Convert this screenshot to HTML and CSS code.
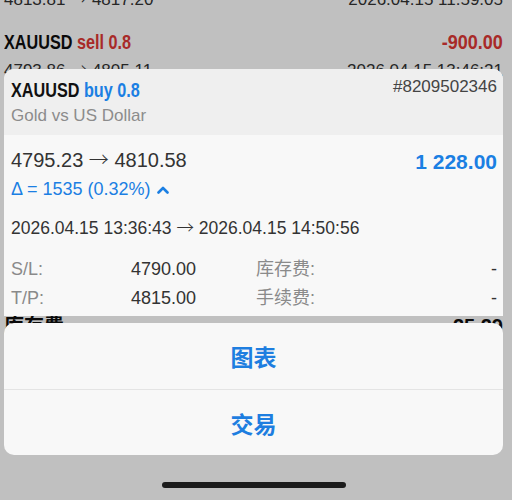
FILE: index.html
```html
<!DOCTYPE html>
<html>
<head>
  <link rel="stylesheet" href="styles.css">
</head>
<body>

  <div class="trades">
    <div class="trade-sub first">
      <span>4813.81 <span class="arrow">→</span> 4817.20</span>
      <span>2026.04.15 11:59:05</span>
    </div>
    <div class="trade-head">
      <span class="cond">XAUUSD <span class="sell">sell 0.8</span></span>
      <span class="cond right loss">-900.00</span>
    </div>
    <div class="trade-sub">
      <span>4793.86 <span class="arrow">→</span> 4805.11</span>
      <span>2026.04.15 13:46:21</span>
    </div>
    <div class="trade-extra">
      <span>库存费</span>
      <span>25.29</span>
    </div>
  </div>

  <div class="popup">
    <div class="card">
      <div class="card-head">
        <div>
          <div class="title"><span class="cond">XAUUSD <span class="buy">buy 0.8</span></span></div>
          <div class="subtitle">Gold vs US Dollar</div>
        </div>
        <div class="ticket">#8209502346</div>
      </div>
      <div class="card-body">
        <div class="price-row">
          <span class="prices">4795.23 <span class="arrow">→</span> 4810.58</span>
          <span class="profit">1 228.00</span>
        </div>
        <div class="delta">
          <span>Δ = 1535 (0.32%)</span>
          <svg width="12" height="9" viewBox="0 0 12 9">
            <path d="M1.5 7.5 L6 3 L10.5 7.5" fill="none" stroke="#1b7fe3" stroke-width="2.6" stroke-linecap="round" stroke-linejoin="round"/>
          </svg>
        </div>
        <div class="times">2026.04.15 13:36:43 <span class="arrow">→</span> 2026.04.15 14:50:56</div>
        <div class="levels">
          <span class="label">S/L:</span>
          <span class="value">4790.00</span>
          <span class="label">库存费:</span>
          <span class="value">-</span>
          <span class="label">T/P:</span>
          <span class="value">4815.00</span>
          <span class="label">手续费:</span>
          <span class="value">-</span>
        </div>
      </div>
    </div>

    <div class="sheet">
      <div class="action">图表</div>
      <div class="action">交易</div>
    </div>

    <div class="home-bar"></div>
  </div>

</body>
</html>
```

FILE: styles.css
```css
body {
  margin: 0;
  height: 500px;
  overflow: hidden;
  position: relative;
  background-color: #c0c0c0;
  font-family: 'Liberation Sans', 'Noto Sans CJK SC', sans-serif;
}

/* narrow bold face for symbols */
.cond {
  display: inline-block;
  font-weight: bold;
  transform: scaleX(0.81);
  transform-origin: left center;
  white-space: nowrap;
}
.cond.right {
  transform: scaleX(0.9);
  transform-origin: right center;
}
.arrow {
  font-family: 'Noto Sans CJK SC', sans-serif;
  font-weight: 300;
  line-height: 1;
}

/* list behind the dimmed overlay */
.trades {
  padding: 0 9px 0 4px;
}
.trade-sub {
  display: flex;
  justify-content: space-between;
  height: 24px;
  font-size: 17px;
  line-height: 24px;
  color: #262626;
  margin-top: 3px;
}
.trade-sub.first {
  margin-top: -12px;
}
.trade-head {
  display: flex;
  justify-content: space-between;
  height: 28px;
  margin-top: 16px;
  font-size: 20px;
  line-height: 28px;
  color: #0a0a0a;
}
.sell, .loss {
  color: #a82a28;
}
.trade-extra {
  display: flex;
  justify-content: space-between;
  margin-top: 229px;
  font-size: 20px;
  line-height: 28px;
  font-weight: bold;
  color: #0a0a0a;
}

/* overlay */
.popup {
  position: absolute;
  top: 0;
  left: 0;
  right: 0;
  bottom: 0;
  padding: 69px 9px 0 4px;
  display: flex;
  flex-direction: column;
}
.card {
  background-color: #f8f8f8;
  border-radius: 10px 10px 0 0;
  overflow: hidden;
}
.card-head {
  display: flex;
  justify-content: space-between;
  align-items: flex-start;
  padding: 9px 6px 7px 7px;
  background-color: #efefef;
}
.title {
  height: 24px;
  font-size: 20px;
  line-height: 24px;
  color: #111;
}
.buy {
  color: #1b7fe3;
}
.subtitle {
  margin-top: 2px;
  height: 24px;
  font-size: 17px;
  line-height: 24px;
  color: #8c8c8c;
}
.ticket {
  font-size: 17px;
  line-height: 18px;
  color: #444;
}
.card-body {
  padding: 13px 6px 3px 7px;
}
.price-row {
  display: flex;
  justify-content: space-between;
  align-items: flex-start;
  height: 24px;
}
.prices {
  font-size: 20px;
  line-height: 24px;
  color: #333;
}
.profit {
  margin-top: 2px;
  font-size: 21px;
  line-height: 24px;
  font-weight: bold;
  color: #1b7fe3;
}
.delta {
  display: flex;
  align-items: center;
  gap: 6px;
  height: 24px;
  margin-top: 5px;
  font-size: 18px;
  line-height: 24px;
  color: #1b7fe3;
}
.times {
  height: 24px;
  margin-top: 15px;
  font-size: 17.5px;
  line-height: 24px;
  color: #333;
}
.levels {
  display: grid;
  grid-template-columns: 120px 125px 1fr auto;
  grid-auto-rows: 29px;
  margin-top: 15px;
  font-size: 18px;
  line-height: 29px;
}
.label {
  color: #8a8a8a;
}
.value {
  color: #333;
}

.sheet {
  margin-top: 7px;
  background-color: #f8f8f8;
  border-radius: 10px;
  overflow: hidden;
}
.action {
  height: 66px;
  box-sizing: border-box;
  display: flex;
  align-items: center;
  justify-content: center;
  font-size: 23px;
  font-weight: bold;
  color: #1e7ee0;
}
.action + .action {
  border-top: 1px solid #e4e4e4;
}

.home-bar {
  margin: 27px auto 0;
  width: 184px;
  height: 6px;
  border-radius: 3px;
  background-color: #1c1c1c;
}
```
